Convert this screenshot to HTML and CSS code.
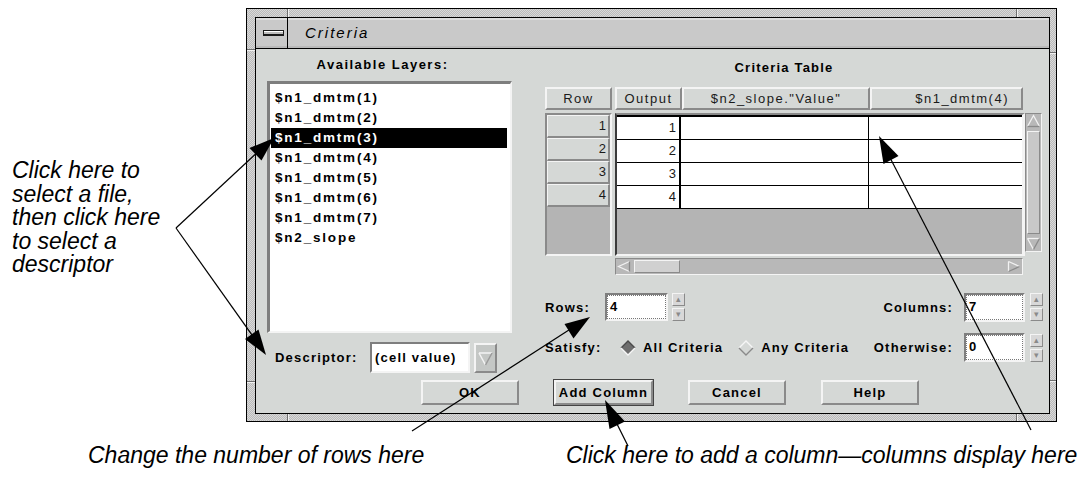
FILE: index.html
```html
<!DOCTYPE html>
<html>
<head>
<meta charset="utf-8">
<link rel="stylesheet" href="styles.css">
</head>
<body>
<div class="page">
  <div class="window">
    <span class="tick tv t1"></span><span class="tick tv t2"></span>
    <span class="tick tv b1"></span><span class="tick tv b2"></span>
    <span class="tick th1 l1"></span><span class="tick th1 l2"></span>
    <span class="tick th1 r1"></span><span class="tick th1 r2"></span>
    <div class="inner">
      <div class="titlebar">
        <div class="menu-btn"><span class="menu-bar"></span></div>
        <div class="title">Criteria</div>
      </div>
      <div class="dlg">
        <div class="cols">
          <div class="left">
            <div class="lbl-head">Available Layers:</div>
            <div class="list">
              <div class="item">$n1_dmtm(1)</div>
              <div class="item">$n1_dmtm(2)</div>
              <div class="item sel">$n1_dmtm(3)</div>
              <div class="item">$n1_dmtm(4)</div>
              <div class="item">$n1_dmtm(5)</div>
              <div class="item">$n1_dmtm(6)</div>
              <div class="item">$n1_dmtm(7)</div>
              <div class="item">$n2_slope</div>
            </div>
            <div class="desc-row">
              <span class="lbl desc-lbl">Descriptor:</span>
              <div class="field desc-field">(cell value)</div>
              <div class="dd-btn">
                <svg width="17" height="20" viewBox="0 0 17 20"><polyline points="2,5 15,5" stroke="#f4f4f4" stroke-width="1.5" fill="none"/><polyline points="2,5 8.5,17" stroke="#f4f4f4" stroke-width="1.5" fill="none"/><polyline points="15,5 8.5,17" stroke="#9a9a9a" stroke-width="1.5" fill="none"/></svg>
              </div>
            </div>
          </div>
          <div class="right">
            <div class="tbl-title">Criteria Table</div>
            <div class="thead">
              <div class="th th-row">Row</div>
              <div class="th-cols">
                <div class="th c-out">Output</div>
                <div class="th c-val">$n2_slope."Value"</div>
                <div class="th c-last">$n1_dmtm(4)</div>
              </div>
            </div>
            <div class="tbody">
              <div class="rh-col">
                <div class="rh">1</div>
                <div class="rh">2</div>
                <div class="rh">3</div>
                <div class="rh">4</div>
              </div>
              <div class="grid-area">
                <div class="grid">
                  <div class="gr"><div class="gc g-out">1</div><div class="gc g-val"></div><div class="gc g-last"></div></div>
                  <div class="gr"><div class="gc g-out">2</div><div class="gc g-val"></div><div class="gc g-last"></div></div>
                  <div class="gr"><div class="gc g-out">3</div><div class="gc g-val"></div><div class="gc g-last"></div></div>
                  <div class="gr"><div class="gc g-out">4</div><div class="gc g-val"></div><div class="gc g-last"></div></div>
                </div>
              </div>
              <div class="vscroll">
                <svg class="arr" width="15" height="14" viewBox="0 0 15 14"><polyline points="1.5,12.5 7.5,1.5 13.5,12.5" stroke="#f2f2f2" stroke-width="1.3" fill="none"/><polyline points="13.5,12.5 1.5,12.5" stroke="#8a8a8a" stroke-width="1.3" fill="none"/></svg>
                <div class="vthumb"></div>
                <svg class="arr" width="15" height="14" viewBox="0 0 15 14"><polyline points="1.5,1.5 13.5,1.5" stroke="#f2f2f2" stroke-width="1.3" fill="none"/><polyline points="1.5,1.5 7.5,12.5" stroke="#f2f2f2" stroke-width="1.3" fill="none"/><polyline points="13.5,1.5 7.5,12.5" stroke="#8a8a8a" stroke-width="1.3" fill="none"/></svg>
              </div>
            </div>
            <div class="hscroll">
              <svg class="arr" width="14" height="13" viewBox="0 0 14 13"><polyline points="12.5,1.5 1.5,6.5 12.5,11.5" stroke="#f2f2f2" stroke-width="1.3" fill="none"/><polyline points="12.5,1.5 12.5,11.5" stroke="#8a8a8a" stroke-width="1.3" fill="none"/></svg>
              <div class="hthumb"></div>
              <div class="hfill"></div>
              <svg class="arr" width="14" height="13" viewBox="0 0 14 13"><polyline points="1.5,1.5 12.5,6.5" stroke="#f2f2f2" stroke-width="1.3" fill="none"/><polyline points="1.5,1.5 1.5,11.5" stroke="#f2f2f2" stroke-width="1.3" fill="none"/><polyline points="12.5,6.5 1.5,11.5" stroke="#8a8a8a" stroke-width="1.3" fill="none"/></svg>
            </div>
            <div class="ctrl-row rows-row">
              <span class="lbl rows-lbl">Rows:</span>
              <div class="field num rows-field">4</div>
              <div class="spin"><span>&#9652;</span><span>&#9662;</span></div>
              <div class="rgroup">
                <span class="lbl">Columns:</span>
                <div class="field num r-field">7</div>
                <div class="spin"><span>&#9652;</span><span>&#9662;</span></div>
              </div>
            </div>
            <div class="ctrl-row sat-row">
              <span class="lbl sat-lbl">Satisfy:</span>
              <svg class="dia" width="16" height="16" viewBox="0 0 16 16"><polygon points="8,1 15,8 8,15 1,8" fill="#6e6e6e"/><polyline points="1,8 8,1 15,8" stroke="#4a4a4a" stroke-width="1.4" fill="none"/><polyline points="1,8 8,15 15,8" stroke="#f6f6f6" stroke-width="1.4" fill="none"/></svg>
              <span class="lbl opt1">All Criteria</span>
              <svg class="dia dia2" width="16" height="16" viewBox="0 0 16 16"><polygon points="8,1 15,8 8,15 1,8" fill="#d5d8d6"/><polyline points="1,8 8,1 15,8" stroke="#f6f6f6" stroke-width="1.4" fill="none"/><polyline points="1,8 8,15 15,8" stroke="#8a8a8a" stroke-width="1.4" fill="none"/></svg>
              <span class="lbl opt2">Any Criteria</span>
              <div class="rgroup">
                <span class="lbl">Otherwise:</span>
                <div class="field num r-field">0</div>
                <div class="spin"><span>&#9652;</span><span>&#9662;</span></div>
              </div>
            </div>
          </div>
        </div>
        <div class="buttons">
          <div class="btn b-ok">OK</div>
          <div class="btn b-add">Add Column</div>
          <div class="btn b-cancel">Cancel</div>
          <div class="btn b-help">Help</div>
        </div>
      </div>
    </div>
  </div>
  <div class="captions">
    <span class="cap cap1">Change the number of rows here</span>
    <span class="cap cap2">Click here to add a column—columns display here</span>
  </div>
  <div class="note-left">Click here to<br>select a file,<br>then click here<br>to select a<br>descriptor</div>
  <svg class="arrows" width="1087" height="477" viewBox="0 0 1087 477">
    <g stroke="#000" stroke-width="1.2" fill="none">
      <line x1="176" y1="228" x2="262" y2="148"/>
      <line x1="176" y1="228" x2="257" y2="342"/>
      <line x1="412" y1="431" x2="572" y2="328"/>
      <line x1="628" y1="446" x2="611" y2="412"/>
      <line x1="1031" y1="430" x2="886" y2="150"/>
    </g>
    <g fill="#000">
      <polygon points="274,138 261.5,160.5 249.5,148"/>
      <polygon points="266,355 245,339 258.5,329.5"/>
      <polygon points="590,317 573.5,338.5 564.5,324"/>
      <polygon points="605,400 625,421.5 609.5,429"/>
      <polygon points="879,136 898.5,156 883.5,164"/>
    </g>
  </svg>
</div>
</body>
</html>
```
FILE: styles.css
```css
* { box-sizing: border-box; }
html, body { margin: 0; padding: 0; background: #fff; }

.page {
  position: relative;
  width: 1087px;
  height: 477px;
  overflow: hidden;
  font-family: "Liberation Sans", Arial, sans-serif;
  color: #000;
}

/* ---------- window frame ---------- */
.window {
  position: relative;
  margin: 8px 0 0 246px;
  width: 811px;
  height: 414px;
  border: 1px solid #000;
  padding: 8px 6px 7px 8px;
  background: repeating-conic-gradient(#bababa 0 25%, #d9d9d9 0 50%) 0 0 / 2px 2px;
}
.tick { position: absolute; }
.tv { width: 2px; background: linear-gradient(90deg, #6e6e6e 50%, #f2f2f2 50%); }
.th1 { height: 2px; background: linear-gradient(180deg, #6e6e6e 50%, #f2f2f2 50%); }
.t1 { left: 40px; top: 0; height: 8px; }
.t2 { left: 769px; top: 0; height: 8px; }
.b1 { left: 40px; top: 405px; height: 7px; }
.b2 { left: 769px; top: 405px; height: 7px; }
.l1 { left: 0; top: 40px; width: 8px; }
.l2 { left: 0; top: 372px; width: 8px; }
.r1 { left: 803px; top: 43px; width: 6px; }
.r2 { left: 803px; top: 371px; width: 6px; }

.inner {
  border: 1px solid #000;
  height: 100%;
  display: flex;
  flex-direction: column;
}

.titlebar {
  height: 31px;
  flex: none;
  display: flex;
  border-bottom: 1px solid #000;
  background: #c9c9c9;
  box-shadow: inset 0 2px 0 #dcdcdc, inset 0 -2px 0 #b9b9b9;
}
.menu-btn {
  width: 32px;
  border-right: 1px solid #000;
  display: flex;
  align-items: center;
  padding-left: 7px;
}
.menu-bar {
  display: block;
  width: 21px;
  height: 6px;
  background: #bdbdbd;
  border: 1px solid #1a1a1a;
  border-bottom-width: 2px;
  box-shadow: inset 0 1px 0 #fff;
}
.title {
  padding-left: 17px;
  font-style: italic;
  font-size: 15px;
  letter-spacing: 2px;
  line-height: 30px;
}

/* ---------- dialog body ---------- */
.dlg {
  flex: 1;
  background: #d5d8d6;
  padding: 0 6px 0 11px;
}
.cols { display: flex; }
.left { width: 245px; }
.right { width: 498px; margin-left: 33px; }

.lbl, .lbl-head, .item, .tbl-title, .btn, .field {
  font-weight: bold;
  font-size: 13px;
  letter-spacing: 1.2px;
}

.lbl-head {
  height: 32px;
  line-height: 32px;
  text-align: center;
  padding-right: 14px;
  letter-spacing: 1.5px;
}

.list {
  height: 252px;
  background: #fff;
  border-style: solid;
  border-width: 3px 2px 2px 3px;
  border-color: #7e7e7e #f4f4f4 #f4f4f4 #7e7e7e;
  padding: 4px 3px 0 1px;
}
.item {
  height: 20px;
  line-height: 20px;
  padding-left: 4px;
  white-space: nowrap;
  font-size: 13.5px;
  letter-spacing: 1.8px;
}
.item.sel { background: #000; color: #fff; }

.desc-row {
  margin-top: 9px;
  height: 31px;
  display: flex;
  align-items: center;
}
.desc-lbl { margin-left: 8px; width: 95px; }

.field {
  background: #fff;
  border-style: solid;
  border-width: 2px;
  border-color: #7e7e7e #f4f4f4 #f4f4f4 #7e7e7e;
  white-space: nowrap;
}
.desc-field {
  width: 100px;
  height: 31px;
  line-height: 27px;
  padding-left: 3px;
}
.dd-btn {
  width: 23px;
  height: 30px;
  margin-left: 4px;
  background: #c4c7c5;
  border-style: solid;
  border-width: 2px;
  border-color: #f4f4f4 #8a8a8a #8a8a8a #f4f4f4;
  display: flex;
  align-items: center;
  justify-content: center;
}

/* ---------- table ---------- */
.tbl-title {
  height: 38px;
  line-height: 38px;
  width: 478px;
  text-align: center;
}
.thead { display: flex; height: 23px; }
.th {
  height: 23px;
  font-size: 13px;
  letter-spacing: 1.5px;
  line-height: 19px;
  text-align: center;
  background: #d5d8d6;
  border-style: solid;
  border-width: 2px;
  border-color: #f4f4f4 #8a8a8a #8a8a8a #f4f4f4;
  white-space: nowrap;
  color: #1a1a1a;
}
.th-row { width: 67px; }
.th-cols { display: flex; margin-left: 3px; width: 408px; }
.c-out { width: 67px; }
.c-val { width: 188px; }
.c-last { width: 153px; text-align: right; padding-right: 12px; }

.tbody { display: flex; margin-top: 3px; height: 143px; }
.rh-col {
  width: 67px;
  background: #b4b4b4;
  border-style: solid;
  border-width: 2px;
  border-color: #8a8a8a #f4f4f4 #f4f4f4 #8a8a8a;
}
.rh {
  height: 23px;
  line-height: 19px;
  font-size: 13px;
  text-align: right;
  padding-right: 2px;
  background: #d5d8d6;
  border-style: solid;
  border-width: 1px 2px 2px 1px;
  border-color: #f4f4f4 #8a8a8a #8a8a8a #f4f4f4;
  color: #1a1a1a;
}
.grid-area {
  margin-left: 3px;
  width: 410px;
  background: #b4b4b4;
  border-style: solid;
  border-width: 2px 3px 2px 2px;
  border-color: #8a8a8a #f4f4f4 #f4f4f4 #3a3a3a;
}
.grid { border-top: 2px solid #000; }
.gr {
  display: flex;
  height: 23px;
  background: #fff;
  border-bottom: 1px solid #000;
}
.gc { font-size: 13px; line-height: 22px; color: #1a1a1a; }
.g-out { width: 64px; border-right: 2px solid #000; text-align: right; padding-right: 3px; }
.g-val { width: 188px; border-right: 1px solid #000; }
.g-last { flex: 1; }

.vscroll {
  width: 17px;
  height: 139px;
  background: #b8b8b8;
  border: 1px solid;
  border-color: #8a8a8a #f4f4f4 #f4f4f4 #8a8a8a;
  display: flex;
  flex-direction: column;
  align-items: center;
}
.arr { display: block; flex: none; }
.vthumb {
  flex: 1;
  width: 13px;
  margin: 3px 0;
  background: #c8c8c8;
  border-style: solid;
  border-width: 1px;
  border-color: #f4f4f4 #8a8a8a #8a8a8a #f4f4f4;
}
.hscroll {
  margin: 2px 0 0 70px;
  width: 408px;
  height: 17px;
  background: #b8b8b8;
  border: 1px solid;
  border-color: #8a8a8a #f4f4f4 #f4f4f4 #8a8a8a;
  display: flex;
  align-items: center;
  padding: 0 1px;
}
.hthumb {
  width: 46px;
  height: 13px;
  margin-left: 3px;
  background: #d0d0d0;
  border-style: solid;
  border-width: 1px;
  border-color: #f4f4f4 #8a8a8a #8a8a8a #f4f4f4;
}
.hfill { flex: 1; }

/* ---------- controls ---------- */
.ctrl-row { display: flex; align-items: center; }
.rows-row { margin-top: 18px; height: 28px; }
.sat-row { margin-top: 12px; height: 29px; }
.rows-lbl { width: 60px; }
.field.num { padding-left: 3px; line-height: 24px; outline: 1px dotted #777; outline-offset: -3px; }
.rows-field { width: 63px; height: 28px; }
.r-field { width: 61px; height: 29px; margin-left: 11px; }
.spin {
  display: flex;
  flex-direction: column;
  gap: 2px;
  margin-left: 4px;
}
.spin span {
  display: block;
  width: 13px;
  height: 13px;
  font-size: 9px;
  line-height: 10px;
  text-align: center;
  color: #8a8a8a;
  background: #d8d8d8;
  border-style: solid;
  border-width: 1px;
  border-color: #f4f4f4 #8a8a8a #8a8a8a #f4f4f4;
}
.rgroup { margin-left: auto; display: flex; align-items: center; }
.rgroup .spin { margin-left: 5px; }
.sat-lbl { width: 75px; }
.dia { display: block; flex: none; }
.opt1 { margin-left: 7px; }
.dia2 { margin-left: 15px; }
.opt2 { margin-left: 7px; }

/* ---------- buttons ---------- */
.buttons {
  display: flex;
  gap: 35px;
  margin-top: 7px;
  padding-left: 154px;
}
.btn {
  height: 25px;
  line-height: 21px;
  text-align: center;
  background: #d5d8d6;
  border-style: solid;
  border-width: 2px;
  border-color: #f4f4f4 #8a8a8a #8a8a8a #f4f4f4;
  white-space: nowrap;
}
.b-ok { width: 98px; }
.b-add { width: 99px; box-shadow: 0 0 0 1px #444; }
.b-cancel { width: 98px; }
.b-help { width: 98px; }

/* ---------- annotations ---------- */
.captions {
  display: flex;
  margin-top: 21px;
  padding-left: 88px;
  font-style: italic;
  font-size: 23px;
  line-height: 24px;
  white-space: nowrap;
}
.cap1 { width: 478px; }

.note-left {
  position: absolute;
  left: 12px;
  top: 159px;
  font-style: italic;
  font-size: 23px;
  line-height: 23.5px;
  white-space: nowrap;
}
.arrows {
  position: absolute;
  left: 0;
  top: 0;
  pointer-events: none;
}
```
